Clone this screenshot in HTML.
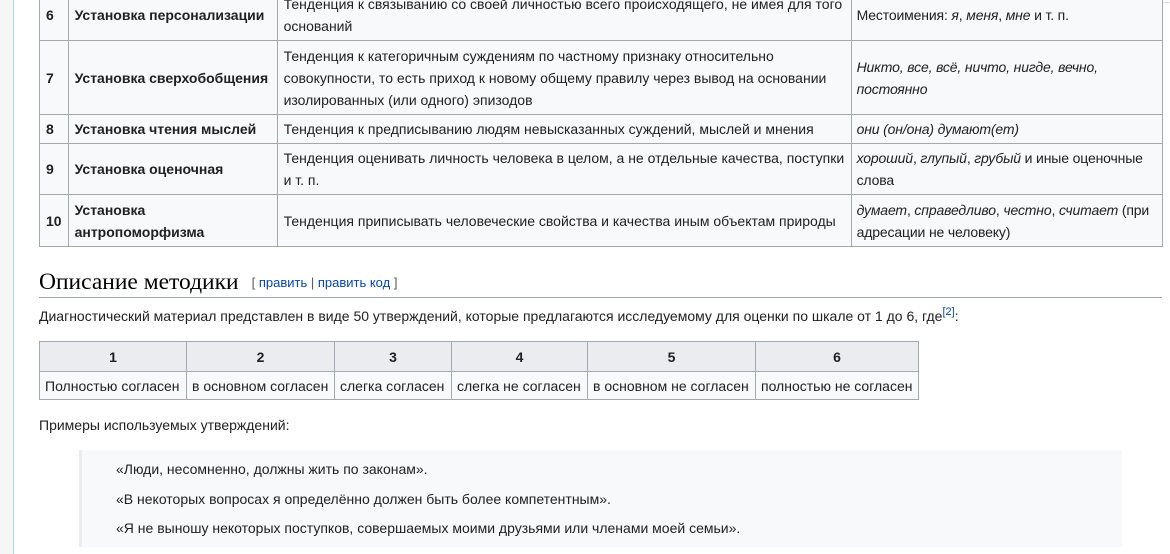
<!DOCTYPE html>
<html><head><meta charset="utf-8"><style>
*{margin:0;padding:0;box-sizing:border-box}
body{width:1170px;height:554px;overflow:hidden;background:#fff;font-family:"Liberation Sans",Arial,sans-serif;font-size:14px;color:#202122;position:relative}
.side{position:absolute;left:0;top:0;width:14px;height:554px;background:#f6f6f6;border-right:1px solid #a7d7f9}
.topline{position:absolute;left:1100px;top:2px;width:70px;height:1px;background:#e0e0e0}
table{border-collapse:collapse;position:absolute}
td,th{border:1px solid #a2a9b1;padding:0 6px;vertical-align:middle;line-height:22px}
#t1{left:39px;top:-12px;width:1124px;background:#f8f9fa}
#t1 td:nth-child(1){width:28px;font-weight:bold}
#t1 td:nth-child(2){width:209px;font-weight:bold}
#t1 td:nth-child(3){width:574px}
#t1 td:nth-child(4){padding:0 4px 0 5px;letter-spacing:-0.15px}
#t2{left:39px;top:341px;background:#f8f9fa}
#t2 th{background:#eaecf0;height:30px;text-align:center;font-weight:bold}
#t2 td{height:28px;text-align:left;padding:0 5px}
h2{position:absolute;left:39px;top:267px;width:1123px;height:31px;border-bottom:1px solid #a2a9b1;font-family:"Liberation Serif",Georgia,serif;font-weight:normal;font-size:23.5px;color:#000;line-height:30px}
h2 span{font-family:"Liberation Sans",sans-serif;font-size:13px;color:#54595d;margin-left:13px;vertical-align:2px}
h2 a{color:#0645ad}
p{position:absolute;left:39px;line-height:22px}
sup{font-size:11px;color:#0645ad;vertical-align:6px;line-height:0}
.bq{position:absolute;left:79px;top:450px;width:1043px;height:97px;background:#f8f9fa;border-left:3px solid #eaecf0}
.bq div{position:absolute;left:34px;line-height:22px}
</style></head><body>
<div class="side"></div><div class="topline"></div>
<table id="t1">
<tr style="height:52px"><td>6</td><td>Установка персонализации</td><td>Тенденция к связыванию со своей личностью всего происходящего, не имея для того оснований</td><td>Местоимения: <i>я</i>, <i>меня</i>, <i>мне</i> и т. п.</td></tr>
<tr style="height:74px"><td>7</td><td>Установка сверхобобщения</td><td>Тенденция к категоричным суждениям по частному признаку относительно совокупности, то есть приход к новому общему правилу через вывод на основании изолированных (или одного) эпизодов</td><td><i>Никто, все, всё, ничто, нигде, вечно, постоянно</i></td></tr>
<tr style="height:29px"><td>8</td><td>Установка чтения мыслей</td><td>Тенденция к предписыванию людям невысказанных суждений, мыслей и мнения</td><td><i>они (он/она) думают(ет)</i></td></tr>
<tr style="height:51px"><td>9</td><td>Установка оценочная</td><td>Тенденция оценивать личность человека в целом, а не отдельные качества, поступки и т. п.</td><td><i>хороший</i>, <i>глупый</i>, <i>грубый</i> и иные оценочные слова</td></tr>
<tr style="height:52px"><td>10</td><td>Установка антропоморфизма</td><td>Тенденция приписывать человеческие свойства и качества иным объектам природы</td><td><i>думает</i>, <i>справедливо</i>, <i>честно</i>, <i>считает</i> (при адресации не человеку)</td></tr>
</table>
<h2>Описание методики<span>[ <a>править</a> | <a>править код</a> ]</span></h2>
<p style="top:305px">Диагностический материал представлен в виде 50 утверждений, которые предлагаются исследуемому для оценки по шкале от 1 до 6, где<sup>[2]</sup>:</p>
<table id="t2">
<tr><th style="width:147px">1</th><th style="width:148px">2</th><th style="width:117px">3</th><th style="width:136px">4</th><th style="width:168px">5</th><th style="width:163px">6</th></tr>
<tr><td>Полностью согласен</td><td>в основном согласен</td><td>слегка согласен</td><td>слегка не согласен</td><td>в основном не согласен</td><td>полностью не согласен</td></tr>
</table>
<p style="top:414px">Примеры используемых утверждений:</p>
<div class="bq">
<div style="top:8px">«Люди, несомненно, должны жить по законам».</div>
<div style="top:38px">«В некоторых вопросах я определённо должен быть более компетентным».</div>
<div style="top:67px">«Я не выношу некоторых поступков, совершаемых моими друзьями или членами моей семьи».</div>
</div>
</body></html>
